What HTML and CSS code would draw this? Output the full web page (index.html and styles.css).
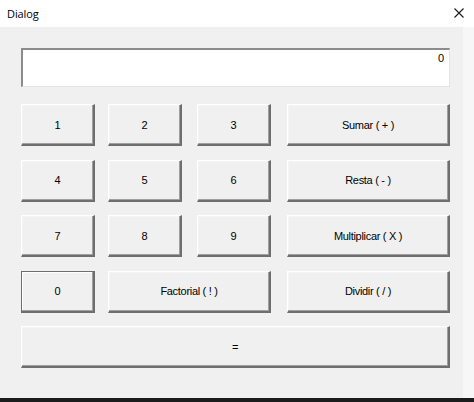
FILE: index.html
```html
<!DOCTYPE html>
<html>
<head>
<meta charset="utf-8">
<link rel="stylesheet" href="styles.css">
</head>
<body>
<div class="window">
  <div class="titlebar">
    <span class="title">Dialog</span>
    <svg class="close" width="10" height="10" viewBox="0 0 10 10"><path d="M0.5 0.5 L9.5 9.5 M9.5 0.5 L0.5 9.5" stroke="#1a1a1a" stroke-width="1.1" fill="none"/></svg>
  </div>
  <div class="client">
    <div class="display"><span>0</span></div>
    <div class="keys">
      <button class="btn c1">1</button>
      <button class="btn c3">2</button>
      <button class="btn c5">3</button>
      <button class="btn c7">Sumar ( + )</button>
      <button class="btn c1">4</button>
      <button class="btn c3">5</button>
      <button class="btn c5">6</button>
      <button class="btn c7">Resta ( - )</button>
      <button class="btn c1">7</button>
      <button class="btn c3">8</button>
      <button class="btn c5">9</button>
      <button class="btn c7">Multiplicar ( X )</button>
      <button class="btn c1 default">0</button>
      <button class="btn c3-5">Factorial ( ! )</button>
      <button class="btn c7">Dividir ( / )</button>
      <button class="btn full">=</button>
    </div>
  </div>
  <div class="taskbar"></div>
</div>
</body>
</html>
```

FILE: styles.css
```css
* { box-sizing: border-box; }
html, body { margin: 0; padding: 0; }
body { width: 474px; height: 402px; overflow: hidden; background: #f0f0f0; }
.window { width: 474px; height: 402px; display: flex; flex-direction: column; }
.titlebar {
  height: 27px; background: #ffffff; display: flex; align-items: center;
  justify-content: space-between; padding: 0 10px 1px 7px; flex: none;
}
.title { font-family: "Open Sans", "Noto Sans", sans-serif; font-size: 11px; color: #000; letter-spacing: -0.1px; }
.close { display: block; }
.client {
  flex: 1; background: #f0f0f0; padding: 21px 0 0 21px;
  border-right: 11px solid #f7f7f7;
}
.display {
  width: 429px; height: 39px; background: #fff;
  border-top: 2px solid #8c8c8c; border-left: 2px solid #8c8c8c;
  border-right: 1px solid #e3e3e3; border-bottom: 1px solid #e3e3e3;
  display: flex; justify-content: flex-end; align-items: flex-start;
  padding: 2px 5px 0 0;
  font-family: "Liberation Sans", Arial, sans-serif; font-size: 11px; color: #000;
}
.keys {
  margin-top: 17px; width: 429px;
  display: grid;
  grid-template-columns: 74px 13px 74px 15px 74px 16px 163px;
  grid-auto-rows: 42px;
  row-gap: 13.5px;
}
.btn {
  margin: 0; padding: 0; background: #f0f0f0;
  font-family: "Liberation Sans", Arial, sans-serif; font-size: 11px; letter-spacing: -0.3px; color: #000;
  border-style: solid; border-width: 1px 2px 2px 1px;
  border-color: #ffffff #6e6e6e #6e6e6e #ffffff;
  box-shadow: inset -1px -1px 0 #a0a0a0, inset 1px 1px 0 #f5f5f5;
  display: flex; align-items: center; justify-content: center;
}
.c1 { grid-column: 1; }
.c3 { grid-column: 3; }
.c5 { grid-column: 5; }
.c7 { grid-column: 7; }
.c3-5 { grid-column: 3 / 6; }
.full { grid-column: 1 / 8; }
.default {
  border-width: 1px 2px 2px 1px;
  border-color: #6e6e6e #6e6e6e #6e6e6e #6e6e6e;
  box-shadow: inset -1px -1px 0 #a0a0a0, inset 1px 1px 0 #ffffff;
}
.taskbar { height: 4px; background: #1b1b1b; flex: none; }
```
